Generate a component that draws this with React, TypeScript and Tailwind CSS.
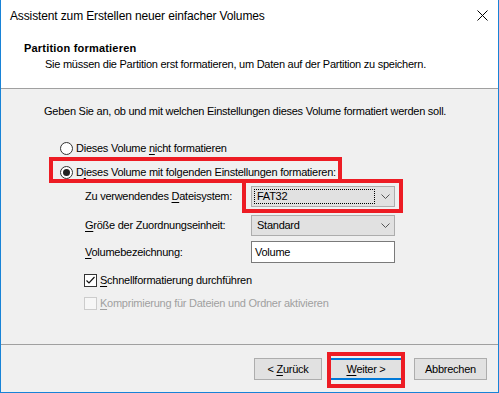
import React from "react";

const U = ({ children }: { children: React.ReactNode }) => <span className="underline underline-offset-[2px] decoration-[1px]">{children}</span>;

function Combo({ value, focus }: { value: string; focus?: boolean }) {
  return (
    <div className="w-[144px] h-[21px] bg-[#e1e1e1] border border-[#adadad] flex items-center pl-[2px] pr-[4px]">
      <div className={"flex-1 h-[15px] flex items-center pl-[2px] " + (focus ? "border border-dotted border-black" : "border border-transparent")}>
        <span className="leading-[13px]">{value}</span>
      </div>
      <svg width="9" height="5" viewBox="0 0 9 5" className="ml-[6px]">
        <polyline points="0.5,0.5 4.5,4.5 8.5,0.5" fill="none" stroke="#555" strokeWidth="1" />
      </svg>
    </div>
  );
}

function Radio({ checked }: { checked?: boolean }) {
  return (
    <div className="w-[13px] h-[13px] rounded-full border border-[#333] bg-white flex items-center justify-center">
      {checked && <div className="w-[7px] h-[7px] rounded-full bg-[#222]" />}
    </div>
  );
}

function Check({ checked, disabled }: { checked?: boolean; disabled?: boolean }) {
  return (
    <div className={"w-[13px] h-[13px] border flex items-center justify-center " + (disabled ? "border-[#cccccc] bg-[#f6f6f6]" : "border-[#333] bg-white")}>
      {checked && (
        <svg width="11" height="11" viewBox="0 0 11 11">
          <polyline points="1.5,5.5 4,8 9.5,2" fill="none" stroke="#111" strokeWidth="1.2" />
        </svg>
      )}
    </div>
  );
}

export default function App() {
  return (
    <div
      className="relative w-[499px] h-[393px] bg-[#f0f0f0] border-x border-b border-[#1883d7] flex flex-col text-[11px] leading-[13px] tracking-[-0.25px] text-black"
      style={{ fontFamily: '"Liberation Sans", Arial, sans-serif' }}
    >
      {/* header */}
      <div className="bg-white h-[89px] border-b border-[#a0a0a0] flex flex-col">
        <div className="h-[31px] flex items-center pl-[9px] pr-[10px]">
          <span className="text-[12px] leading-[14px] tracking-[-0.13px] flex-1">Assistent zum Erstellen neuer einfacher Volumes</span>
          <svg width="11" height="11" viewBox="0 0 11 11">
            <path d="M0.5 0.5 L10.5 10.5 M10.5 0.5 L0.5 10.5" stroke="#000" strokeWidth="1" />
          </svg>
        </div>
        <div className="pl-[23px] mt-[11px] font-bold tracking-[0.2px]">Partition formatieren</div>
        <div className="pl-[44px] mt-[3px]">Sie müssen die Partition erst formatieren, um Daten auf der Partition zu speichern.</div>
      </div>

      {/* body */}
      <div className="flex-1 flex flex-col pl-[43px]">
        <div className="mt-[16px]">Geben Sie an, ob und mit welchen Einstellungen dieses Volume formatiert werden soll.</div>
        <div className="mt-[24px] ml-[16px] h-[13px] flex items-center gap-[3px]">
          <Radio />
          <span>Dieses Volume <U>n</U>icht formatieren</span>
        </div>
        <div className="mt-[11px] ml-[16px] h-[13px] flex items-center gap-[3px]">
          <Radio checked />
          <span>D<U>i</U>eses Volume mit folgenden Einstellungen formatieren:</span>
        </div>
        <div className="mt-[7px] ml-[41px] flex items-center">
          <span className="w-[166px]">Zu verwendendes <U>D</U>ateisystem:</span>
          <Combo value="FAT32" focus />
        </div>
        <div className="mt-[8px] ml-[41px] flex items-center">
          <span className="w-[166px]"><U>G</U>röße der Zuordnungseinheit:</span>
          <Combo value="Standard" />
        </div>
        <div className="mt-[5px] ml-[41px] flex items-center">
          <span className="w-[166px]"><U>V</U>olumebezeichnung:</span>
          <div className="w-[144px] h-[22px] bg-white border border-[#7a7a7a] flex items-center pl-[3px]">Volume</div>
        </div>
        <div className="mt-[11px] ml-[40px] h-[13px] flex items-center gap-[3px]">
          <Check checked />
          <span><U>S</U>chnellformatierung durchführen</span>
        </div>
        <div className="mt-[10px] ml-[40px] h-[13px] flex items-center gap-[3px] text-[#a0a0a0]">
          <Check disabled />
          <span><U>K</U>omprimierung für Dateien und Ordner aktivieren</span>
        </div>
        <div className="flex-1" />
      </div>

      {/* footer */}
      <div className="border-t border-[#a0a0a0] h-[48px] flex items-start justify-end pr-[11px] pt-[13px]">
        <button className="w-[68px] h-[22px] bg-[#e1e1e1] border border-[#adadad] flex items-center justify-center"><span>&lt; <U>Z</U>urück</span></button>
        <button className="ml-[9px] w-[70px] h-[22px] bg-[#e1e1e1] border-y-2 border-[#0078d7] flex items-center justify-center"><span><U>W</U>eiter &gt;</span></button>
        <button className="ml-[13px] w-[73px] h-[22px] bg-[#e1e1e1] border border-[#adadad] flex items-center justify-center">Abbrechen</button>
      </div>

      {/* red annotation boxes */}
      <div className="absolute left-[48px] top-[157px] w-[293px] h-[26px] border-4 border-[#ed1c24]" />
      <div className="absolute left-[241px] top-[179px] w-[161px] h-[34px] border-4 border-[#ed1c24]" />
      <div className="absolute left-[326px] top-[352px] w-[78px] h-[36px] border-4 border-[#ed1c24]" />
    </div>
  );
}
